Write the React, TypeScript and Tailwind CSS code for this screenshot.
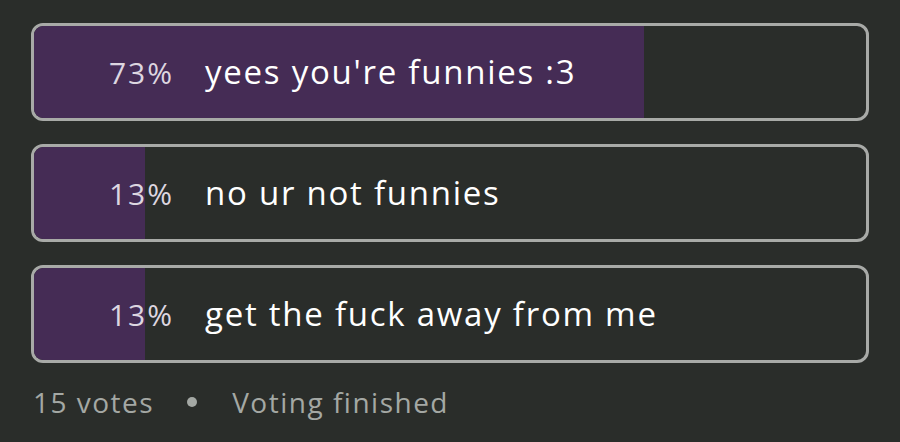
const options = [
  { votes: 11, label: "yees you're funnies :3" },
  { votes: 2, label: "no ur not funnies" },
  { votes: 2, label: "get the fuck away from me" },
];
const total = 15;

export default function App() {
  return (
    <div
      className="w-[900px] h-[442px] bg-[#2a2d2a] px-[31px] pt-[23px]"
      style={{ fontFamily: "'Open Sans', Lato, sans-serif" }}
    >
      <div className="flex flex-col gap-[23px]">
        {options.map((o, i) => (
          <div
            key={i}
            className="relative h-[98px] rounded-[12px] border-[3px] border-[#a8aaa7] overflow-hidden flex items-center"
          >
            <div
              className="absolute inset-y-0 left-0 bg-[#452c55]"
              style={{ width: `${(o.votes / total) * 100}%` }}
            />
            <span className="relative w-[140px] text-right text-[30px] text-[#ddd6e0] tracking-[2px]">
              {Math.round((o.votes / total) * 100)}%
            </span>
            <span className="relative ml-[31px] text-[33px] text-white tracking-[1.75px]">
              {o.label}
            </span>
          </div>
        ))}
      </div>
      <div className="flex items-center mt-[18px] ml-[2px] text-[28px] text-[#a4a8a4] tracking-[1.5px]">
        <span>15 votes</span>
        <span className="ml-[33px] w-[10px] h-[10px] rounded-full bg-[#a4a8a4]" />
        <span className="ml-[35px]">Voting finished</span>
      </div>
    </div>
  );
}
